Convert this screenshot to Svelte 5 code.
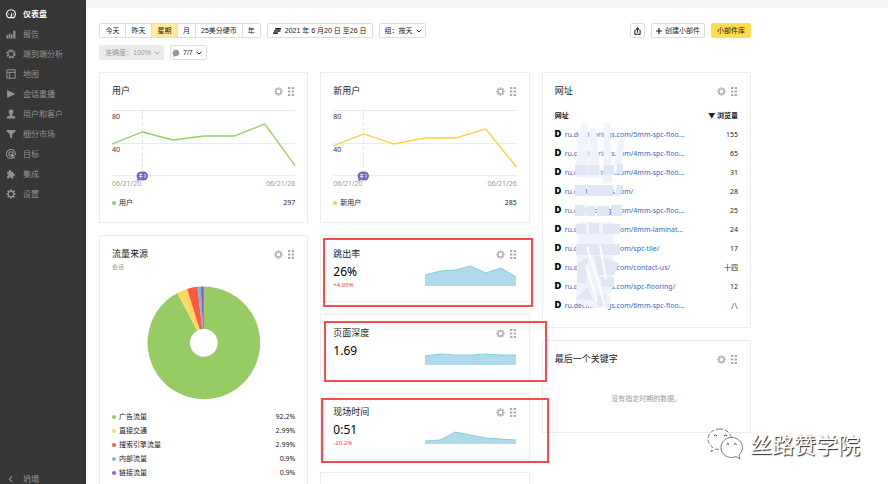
<script lang="ts">
  const nav = [
    { icon: 'gauge', label: '仪表盘' },
    { icon: 'bars', label: '报告' },
    { icon: 'segments', label: '端到端分析' },
    { icon: 'map', label: '地图' },
    { icon: 'play', label: '会话重播' },
    { icon: 'person', label: '用户和客户' },
    { icon: 'funnel', label: '细分市场' },
    { icon: 'target', label: '目标' },
    { icon: 'puzzle', label: '集成' },
    { icon: 'gear', label: '设置' },
  ];

  const periods = ['今天', '昨天', '星期', '月', '25美分硬币', '年'];
  let period = $state('星期');

  const lineCharts = [
    { title: '用户', total: 297, tone: 'green', points: [34, 22, 30, 26, 26, 14, 56] },
    { title: '新用户', total: 285, tone: 'yellow', points: [36, 24, 34, 28, 28, 19, 57] },
  ];

  const sources = [
    { label: '广告流量', value: 92.2, color: '#97cc64' },
    { label: '直接交通', value: 2.99, color: '#ffd963' },
    { label: '搜索引擎流量', value: 2.99, color: '#fd5a3e' },
    { label: '内部流量', value: 0.9, color: '#77b6e7' },
    { label: '链接流量', value: 0.9, color: '#a955b8' },
  ];

  const metrics = [
    { title: '跳出率', value: '26%', change: '+4.05%', mark: 'mark-a', points: [11, 15, 16, 20, 13, 18, 9] },
    { title: '页面深度', value: '1.69', change: '', mark: 'mark-b', points: [9, 11, 10, 10, 11, 10, 10] },
    { title: '现场时间', value: '0:51', change: '-20.2%', mark: 'mark-c', points: [3, 4, 12, 9, 6, 5, 4] },
  ];

  const host = 'ru.decfloorings.com';
  const pages = [
    { path: '/5mm-spc-floo...', views: '155' },
    { path: '/4mm-spc-floo...', views: '65' },
    { path: '/4mm-spc-floo...', views: '31' },
    { path: '/', views: '28' },
    { path: '/4mm-spc-floo...', views: '25' },
    { path: '/8mm-laminat...', views: '24' },
    { path: '/spc-tile/', views: '17' },
    { path: '/contact-us/', views: '十四' },
    { path: '/spc-flooring/', views: '12' },
    { path: '/6mm-spc-floo...', views: '八' },
  ];

  function linePath(points: number[]) {
    return points.map((y, i) => `${(i * 184) / 6},${y}`).join(' ');
  }

  function sparkPath(points: number[]) {
    return points.map((h, i) => `${(i * 92) / 6},${24 - h}`).join(' ');
  }

  function slicePaths() {
    const total = sources.reduce((sum, s) => sum + s.value, 0);
    let start = 0;
    return sources.map((s) => {
      const end = start + (s.value / total) * Math.PI * 2;
      const large = end - start > Math.PI ? 1 : 0;
      const at = (r: number, a: number) => `${57 + r * Math.sin(a)} ${57 - r * Math.cos(a)}`;
      const d = `M${at(56.5, start)} A56.5 56.5 0 ${large} 1 ${at(56.5, end)} L${at(14, end)} A14 14 0 ${large} 0 ${at(14, start)}Z`;
      start = end;
      return { d, color: s.color };
    });
  }
</script>

{#snippet gear()}
  <svg viewBox="0 0 18 18" aria-hidden="true">
    <circle cx="9" cy="9" r="5" fill="none" stroke="currentColor" stroke-width="2.400" />
    <path
      d="M9 .5v3.5M9 14v3.5M.5 9h3.5M14 9h3.5M3 3l2.5 2.5M12.500 12.500l2.500 2.500M15 3l-2.500 2.500M5.500 12.500l-2.500 2.500"
      stroke="currentColor"
      stroke-width="3"
    />
  </svg>
{/snippet}

{#snippet chevron()}
  <svg class="chevron" viewBox="0 0 6 4" aria-hidden="true">
    <path d="M.6.7 3 3.100 5.400.7" fill="none" stroke="currentColor" />
  </svg>
{/snippet}

{#snippet cardHeader(title: string)}
  <header class="card-header">
    <h2>{title}</h2>
    <button class="tool" aria-label="设置">{@render gear()}</button>
    <button class="tool grip" aria-label="移动">
      <svg viewBox="0 0 6 9" aria-hidden="true">
        {#each [0, 3.500, 7] as y}
          <rect x="0" {y} width="2.300" height="2" fill="currentColor" />
          <rect x="3.700" {y} width="2.300" height="2" fill="currentColor" />
        {/each}
      </svg>
    </button>
  </header>
{/snippet}

{#snippet navIcon(name: string)}
  {#if name === 'gear'}
    {@render gear()}
  {:else}
    <svg viewBox="0 0 18 18" aria-hidden="true" fill="currentColor">
      {#if name === 'gauge'}
        <path d="M4 15.500a8 8 0 1 1 10 0Z" fill="none" stroke="currentColor" stroke-width="2" />
        <path d="m8 14 2.500-9 .8 9Z" />
        <circle cx="5" cy="9" r="1" /><circle cx="13.500" cy="9" r="1" />
      {:else if name === 'bars'}
        <path d="M1 11h3v6H1zM5 8h3v9H5zM9 10h3v7H9zM13 3h4v14h-4z" />
      {:else if name === 'segments'}
        <circle cx="9" cy="9" r="6" fill="none" stroke="currentColor" stroke-width="4.500" stroke-dasharray="3.300 1.400" />
      {:else if name === 'map'}
        <path d="M1.500 1.500h15v15h-15zM1.500 6h15M6.500 6v10.500" fill="none" stroke="currentColor" stroke-width="1.800" />
      {:else if name === 'play'}
        <path d="m2 2 15 7-15 7Z" />
      {:else if name === 'person'}
        <path d="M9 1c6 0 4.500 7 2 9v2l5.500 1.500V17h-15v-3.500L7 12v-2C4.500 8 3 1 9 1Z" />
      {:else if name === 'funnel'}
        <path d="M1 2h16v2l-6 6v7l-4-2v-5L1 4Z" />
      {:else if name === 'target'}
        <path d="M14 15a8 8 0 1 1 2.500-4M9 13a4 4 0 1 1 4-4" fill="none" stroke="currentColor" stroke-width="2" />
        <path d="m8 8 9 3-3.500 1.500L17 16l-1.500 1.500-3.500-3.500L10.500 17Z" />
      {:else if name === 'puzzle'}
        <path d="M2 5h3.500C4 0 10 0 9 5h4v4c5-1.500 5 4.500 0 3v5H9c.5-3-4-3-3.500 0H2v-4.500c3 .5 3-3.500 0-3Z" />
      {/if}
    </svg>
  {/if}
{/snippet}

<div class="app">
  <nav class="sidebar">
    <ul>
      {#each nav as item, i}
        <li>
          <a href="#{item.icon}" class:active={i === 0}>
            {@render navIcon(item.icon)}
            {item.label}
          </a>
        </li>
      {/each}
    </ul>
    <button class="collapse">
      <svg viewBox="0 0 18 18" aria-hidden="true">
        <path d="M11 4 6 9l5 5" fill="none" stroke="currentColor" stroke-width="2" />
      </svg>
      坍塌
    </button>
  </nav>

  <main>
    <div class="strip"></div>

    <div class="content">
      <div class="toolbar">
        <div class="segmented">
          {#each periods as name}
            <button
              class:selected={period === name}
              class:wide={name.length > 1}
              onclick={() => (period = name)}>{name}</button
            >
          {/each}
        </div>
        <button class="control date">
          <svg viewBox="0 0 9 7" aria-hidden="true">
            <path d="M2.500 0H9v2H2.500zM1 2.500h7.500v2H1zM0 5h5.500v2H0z" fill="currentColor" />
          </svg>
          2021 年 6 月20 日 至26 日
        </button>
        <div class="dropdown">
          <select class="control" aria-label="组">
            <option>组：按天</option>
          </select>
          {@render chevron()}
        </div>
        <button class="control square" aria-label="导出">
          <svg viewBox="0 0 8 9" aria-hidden="true">
            <path d="M2 4H1v4.300h6V4H6M4 6.500V2" fill="none" stroke="currentColor" stroke-width="1.200" />
            <path d="m4 0 2.500 3h-5Z" fill="currentColor" />
          </svg>
        </button>
        <button class="control create">
          <svg viewBox="0 0 6 6" aria-hidden="true">
            <path d="M3 0v6M0 3h6" stroke="currentColor" stroke-width="1.200" />
          </svg>
          创建小部件
        </button>
        <button class="control primary">小部件库</button>
      </div>

      <div class="toolbar">
        <div class="dropdown muted">
          <select class="control" aria-label="准确度">
            <option>准确度：100%</option>
          </select>
          {@render chevron()}
        </div>
        <button class="control notes">
          <svg viewBox="0 0 8 8" aria-hidden="true">
            <path d="M4 .5a3.400 3.400 0 1 1-1.200 6.600L1 8l.3-2A3.400 3.400 0 0 1 4 .5Z" fill="#999" />
          </svg>
          7/7
          {@render chevron()}
        </button>
      </div>

      <div class="board">
        <div class="column">
          {@render lineCard(lineCharts[0])}

          <section class="card sources">
            {@render cardHeader('流量来源')}
            <p class="subtitle">会话</p>
            <svg class="donut" viewBox="0 0 114 114" role="img" aria-label="流量来源">
              {#each slicePaths() as slice}
                <path d={slice.d} fill={slice.color} />
              {/each}
            </svg>
            <ul class="legend">
              {#each sources as source}
                <li>
                  <span class="dot" style:background={source.color}></span>
                  {source.label}
                  <span class="amount">{source.value}%</span>
                </li>
              {/each}
            </ul>
          </section>
        </div>

        <div class="column">
          {@render lineCard(lineCharts[1])}

          {#each metrics as metric}
            <section class="card metric">
              {@render cardHeader(metric.title)}
              <div class="metric-body">
                <div>
                  <p class="value">{metric.value}</p>
                  <p class="change">{metric.change}</p>
                </div>
                <svg class="spark" viewBox="0 0 92 24" preserveAspectRatio="none" aria-hidden="true">
                  <polygon points="0,24 {sparkPath(metric.points)} 92,24" fill="#aedaea" />
                  <polyline points={sparkPath(metric.points)} fill="none" stroke="#85cde0" />
                </svg>
              </div>
              <div class="mark {metric.mark}"></div>
            </section>
          {/each}

          <section class="card metric"></section>
        </div>

        <div class="column">
          <section class="card">
            {@render cardHeader('网址')}
            <div class="pages">
              <table>
                <thead>
                  <tr><th>网址</th><th class="num">▼ 浏览量</th></tr>
                </thead>
                <tbody>
                  {#each pages as page}
                    <tr>
                      <td><span class="favicon">D</span><a href="#pages">{host}{page.path}</a></td>
                      <td class="num">{page.views}</td>
                    </tr>
                  {/each}
                </tbody>
              </table>
              <svg class="smudge" viewBox="0 0 54 186" aria-hidden="true">
                <g fill="#f0f3fb">
                  <path d="M8 0h6l1 54H2L3 18ZM16 5h6l5 50H15ZM30 0h6l2 60h-9ZM46 14l5 2-4 26h-7Z" />
                  <path d="M4 99h36v20l-4 66H20L2 180Z" />
                </g>
                <g fill="#e0e6f4">
                  <path d="M1 42h12v10H1zM14 42h11v10H14zM30 42h10v10H30zM43 41h6v10h-7z" />
                  <path d="M1 62h11v11H1zM13 62h26v11H13zM43 62h7l-4 11h-5z" />
                  <path d="M1 82h10v11H1zM12 83h9v10h-9zM23 83h12v10H23zM37 82h11v11H37z" />
                  <path d="M2 101h10v10H2zM15 100h10v11H15zM29 101h17v10H29z" />
                  <path d="M2 121h44v11H2zM20 132l25 8-5 12H24ZM4 140l10-6-2 26H3ZM26 154h14v10H28ZM1 176l13-12 5 13ZM22 172h9l2 11h-9z" />
                </g>
                <path d="m13 124 11 34 7 26M26 122l6 34M12 142l11 36" fill="none" stroke="#fff" stroke-width="2" />
              </svg>
            </div>
          </section>

          <section class="card keywords">
            {@render cardHeader('最后一个关键字')}
            <p class="empty">没有指定时期的数据。</p>
          </section>
        </div>
      </div>
    </div>
  </main>

  <div class="watermark">
    <svg viewBox="0 0 36 32" aria-hidden="true">
      <g fill="#fff" stroke="#555" stroke-width=".8">
        <path d="M13 1C6 1 1 5.500 1 11c0 3.300 1.700 6 4.500 8L4 23.500l5-2.500c2 .6 4 .7 6 .5l10-8C25 6 20 1 13 1Z" stroke-dasharray="4 2" />
        <path d="M24.500 9.500C18.500 9.500 14 14 14 19.500s4.500 10 10.500 10c1.700 0 3.200-.3 4.500-1l4 2.500-1-4c2-1.800 3.500-4.300 3.500-7.500 0-5.500-5-10-11-10Z" />
      </g>
      <path d="M7 8q1.500-2 3 0M17 8q1.500-2 3 0M19.500 16.500q1.300-2 2.600 0M27 16.500q1.300-2 2.600 0" fill="none" stroke="#333" />
    </svg>
    丝路赞学院
  </div>
</div>

{#snippet lineCard(chart: { title: string; total: number; tone: string; points: number[] })}
  <section class="card line-card {chart.tone}">
    {@render cardHeader(chart.title)}
    <div class="plot">
      <svg viewBox="0 0 184 66" preserveAspectRatio="none" aria-hidden="true">
        <path d="M0 .5h184M0 33.500h184M0 65.500h184" stroke="#ebebeb" />
        <path d="M30.500 0v66" stroke="#e3e3e3" stroke-dasharray="4 2" />
        <polyline points={linePath(chart.points)} fill="none" stroke="currentColor" stroke-width="1.300" />
      </svg>
      <span class="tick">80</span>
      <span class="tick half">40</span>
      <svg class="note" viewBox="0 0 12 11" aria-hidden="true">
        <circle cx="7.500" cy="5" r="4.500" fill="#7a66b5" />
        <path d="M4.800.5a4.400 4.400 0 1 1-1.300 8.600L1 10.500l.5-3A4.400 4.400 0 0 1 4.800.5Z" fill="#7a66b5" />
        <path d="M3 3.500h3.500M3 5.500h3.500M4.700 2.500v5M8.500 2.800q2 2 0 4.200" fill="none" stroke="#ddd6f2" />
      </svg>
    </div>
    <div class="range"><span>06/21/20</span><span>06/21/26</span></div>
    <ul class="legend">
      <li>
        <span class="dot"></span>
        {chart.title}
        <span class="amount">{chart.total}</span>
      </li>
    </ul>
  </section>
{/snippet}

<style>
  :global(body) {
    margin: 0;
    background: #fff;
  }

  .app {
    position: relative;
    display: flex;
    height: 100vh;
    overflow: hidden;
    font-family: 'Noto Sans', 'Noto Sans CJK SC', sans-serif;
    font-size: 7px;
    line-height: 14px;
    color: #222;
  }

  ul,
  p,
  h2 {
    margin: 0;
    padding: 0;
    list-style: none;
  }

  svg {
    display: block;
    flex-shrink: 0;
  }

  a {
    text-decoration: none;
  }

  button,
  select {
    font: inherit;
    color: inherit;
    margin: 0;
    cursor: pointer;
  }

  .sidebar {
    width: 86px;
    flex-shrink: 0;
    box-sizing: border-box;
    display: flex;
    flex-direction: column;
    justify-content: space-between;
    padding-top: 4px;
    background: #373737;
    border-right: 1px solid #333;
    font-size: 8px;
  }

  .sidebar a,
  .collapse {
    display: flex;
    align-items: center;
    gap: 7px;
    height: 20px;
    padding: 0 6px;
    color: #929292;
  }

  .sidebar svg {
    width: 10px;
    height: 10px;
  }

  .sidebar a.active {
    color: #fff;
    font-weight: 700;
  }

  .collapse {
    height: 10px;
    border: 0;
    background: none;
  }

  main {
    flex: 1;
    min-width: 0;
  }

  .strip {
    height: 8px;
    background: #f5f4f2;
  }

  .content {
    max-width: 652px;
    padding: 15px 13px 0;
  }

  .toolbar {
    display: flex;
    gap: 6px;
    margin-bottom: 7px;
    font-family: 'Liberation Sans', 'Noto Sans CJK SC', sans-serif;
  }

  .segmented {
    display: flex;
    border: 1px solid #ddd;
    border-radius: 2px;
  }

  .segmented button {
    height: 13px;
    padding: 0 5px;
    border: 0;
    border-right: 1px solid #ddd;
    background: #fff;
    line-height: 13px;
  }

  .segmented .wide {
    min-width: 26px;
  }

  .segmented button:last-child {
    border-right: 0;
  }

  .segmented .selected {
    background: #ffeba0;
  }

  .control {
    display: flex;
    align-items: center;
    height: 15px;
    box-sizing: border-box;
    padding: 0 5px;
    border: 1px solid #ddd;
    border-radius: 2px;
    background: #fff;
    line-height: 13px;
    white-space: nowrap;
  }

  .date {
    gap: 4px;
  }

  .date svg {
    width: 8px;
    height: 6px;
  }

  .dropdown {
    position: relative;
    color: #222;
  }

  .dropdown select {
    appearance: none;
    padding-right: 12px;
  }

  .dropdown .chevron {
    position: absolute;
    right: 4px;
    top: 6px;
    pointer-events: none;
  }

  .chevron {
    width: 6px;
    height: 4px;
  }

  .muted {
    color: #999;
  }

  .muted .control {
    background: #ebebeb;
    border-color: #ebebeb;
  }

  .notes {
    gap: 3px;
    padding: 0 4px 0 1px;
  }

  .notes svg:first-child {
    width: 8px;
    height: 8px;
  }

  .square {
    width: 15px;
    padding: 0;
    justify-content: center;
    margin-left: auto;
  }

  .square svg {
    width: 7px;
    height: 8px;
  }

  .create {
    gap: 3px;
    padding: 0 4px;
  }

  .create svg {
    width: 6px;
    height: 6px;
  }

  .primary {
    background: #ffdb4d;
    border-color: #ffdb4d;
  }

  .board {
    display: grid;
    grid-template-columns: repeat(3, minmax(0, 1fr));
    gap: 12px;
    align-items: start;
    padding-top: 5px;
  }

  .column {
    display: flex;
    flex-direction: column;
    gap: 12px;
  }

  .card {
    position: relative;
    box-sizing: border-box;
    padding: 11px 12px 12px;
    border: 1px solid #ededed;
    background: #fff;
  }

  .card-header {
    display: flex;
    align-items: center;
    gap: 5px;
    height: 14px;
    padding-right: 1px;
  }

  .card-header h2 {
    flex: 1;
    font-size: 9px;
    font-weight: 400;
  }

  .tool {
    padding: 0;
    border: 0;
    background: none;
    color: #aaa;
  }

  .tool svg {
    width: 9px;
    height: 9px;
  }

  .grip svg {
    width: 6px;
  }

  .green {
    color: #97cc64;
  }

  .yellow {
    color: #ffcf3f;
  }

  .line-card h2,
  .line-card .legend {
    color: #222;
  }

  .plot {
    position: relative;
    margin-top: 12px;
  }

  .plot > svg:first-child {
    width: 100%;
    height: 66px;
  }

  .tick {
    position: absolute;
    left: 0;
    top: 0;
    color: #333;
  }

  .half {
    top: 50%;
  }

  .note {
    position: absolute;
    left: 13%;
    bottom: -6px;
    width: 12px;
    height: 11px;
  }

  .range {
    display: flex;
    justify-content: space-between;
    margin: 1px 0 5px;
    color: #999;
  }

  .legend li {
    display: flex;
    align-items: center;
    gap: 3px;
  }

  .dot {
    width: 4px;
    height: 4px;
    border-radius: 50%;
  }

  .green .dot {
    background: #97cc64;
  }

  .yellow .dot {
    background: #ffcf3f;
  }

  .amount {
    margin-left: auto;
  }

  .subtitle {
    color: #999;
    font-size: 6px;
    line-height: 12px;
  }

  .donut {
    width: 62%;
    margin: 13px auto 10px;
  }

  .metric {
    min-height: 67px;
    padding-bottom: 10px;
  }

  .metric-body {
    display: flex;
    justify-content: space-between;
    padding-right: 1px;
  }

  .value {
    margin-top: 4px;
    font-size: 12px;
    color: #000;
  }

  .change {
    font-size: 6px;
    line-height: 12px;
    color: #e8404a;
  }

  .spark {
    width: 50%;
    height: 24px;
    margin-top: 1px;
  }

  .mark {
    position: absolute;
    z-index: 1;
    border: 2px solid #f64c4c;
    pointer-events: none;
  }

  .mark-a {
    inset: 2px -4px -6px 2px;
  }

  .mark-b {
    inset: 6px -18px -2px 3px;
  }

  .mark-c {
    inset: 4px -20px -4px 0;
  }

  .pages {
    position: relative;
    margin-top: 8px;
  }

  table {
    width: 100%;
    border-collapse: collapse;
  }

  th,
  td {
    height: 19px;
    padding: 0;
    text-align: left;
    white-space: nowrap;
  }

  .num {
    text-align: right;
  }

  td a {
    color: #3a66c4;
  }

  .favicon {
    display: inline-block;
    width: 10px;
    font-family: Inter, sans-serif;
    font-size: 9px;
    font-weight: 900;
    color: #000;
  }

  .smudge {
    position: absolute;
    left: 19px;
    top: 17px;
    width: 54px;
    height: 186px;
    pointer-events: none;
  }

  .keywords {
    padding-bottom: 26px;
  }

  .empty {
    margin-top: 26px;
    text-align: center;
    color: #999;
  }

  .watermark {
    position: absolute;
    right: 28px;
    bottom: 24px;
    z-index: 2;
    display: flex;
    align-items: center;
    gap: 7px;
    font-size: 22px;
    line-height: 32px;
    color: #fff;
    text-shadow: 1px 1px 1px #222;
  }

  .watermark svg {
    width: 36px;
    height: 32px;
  }
</style>
